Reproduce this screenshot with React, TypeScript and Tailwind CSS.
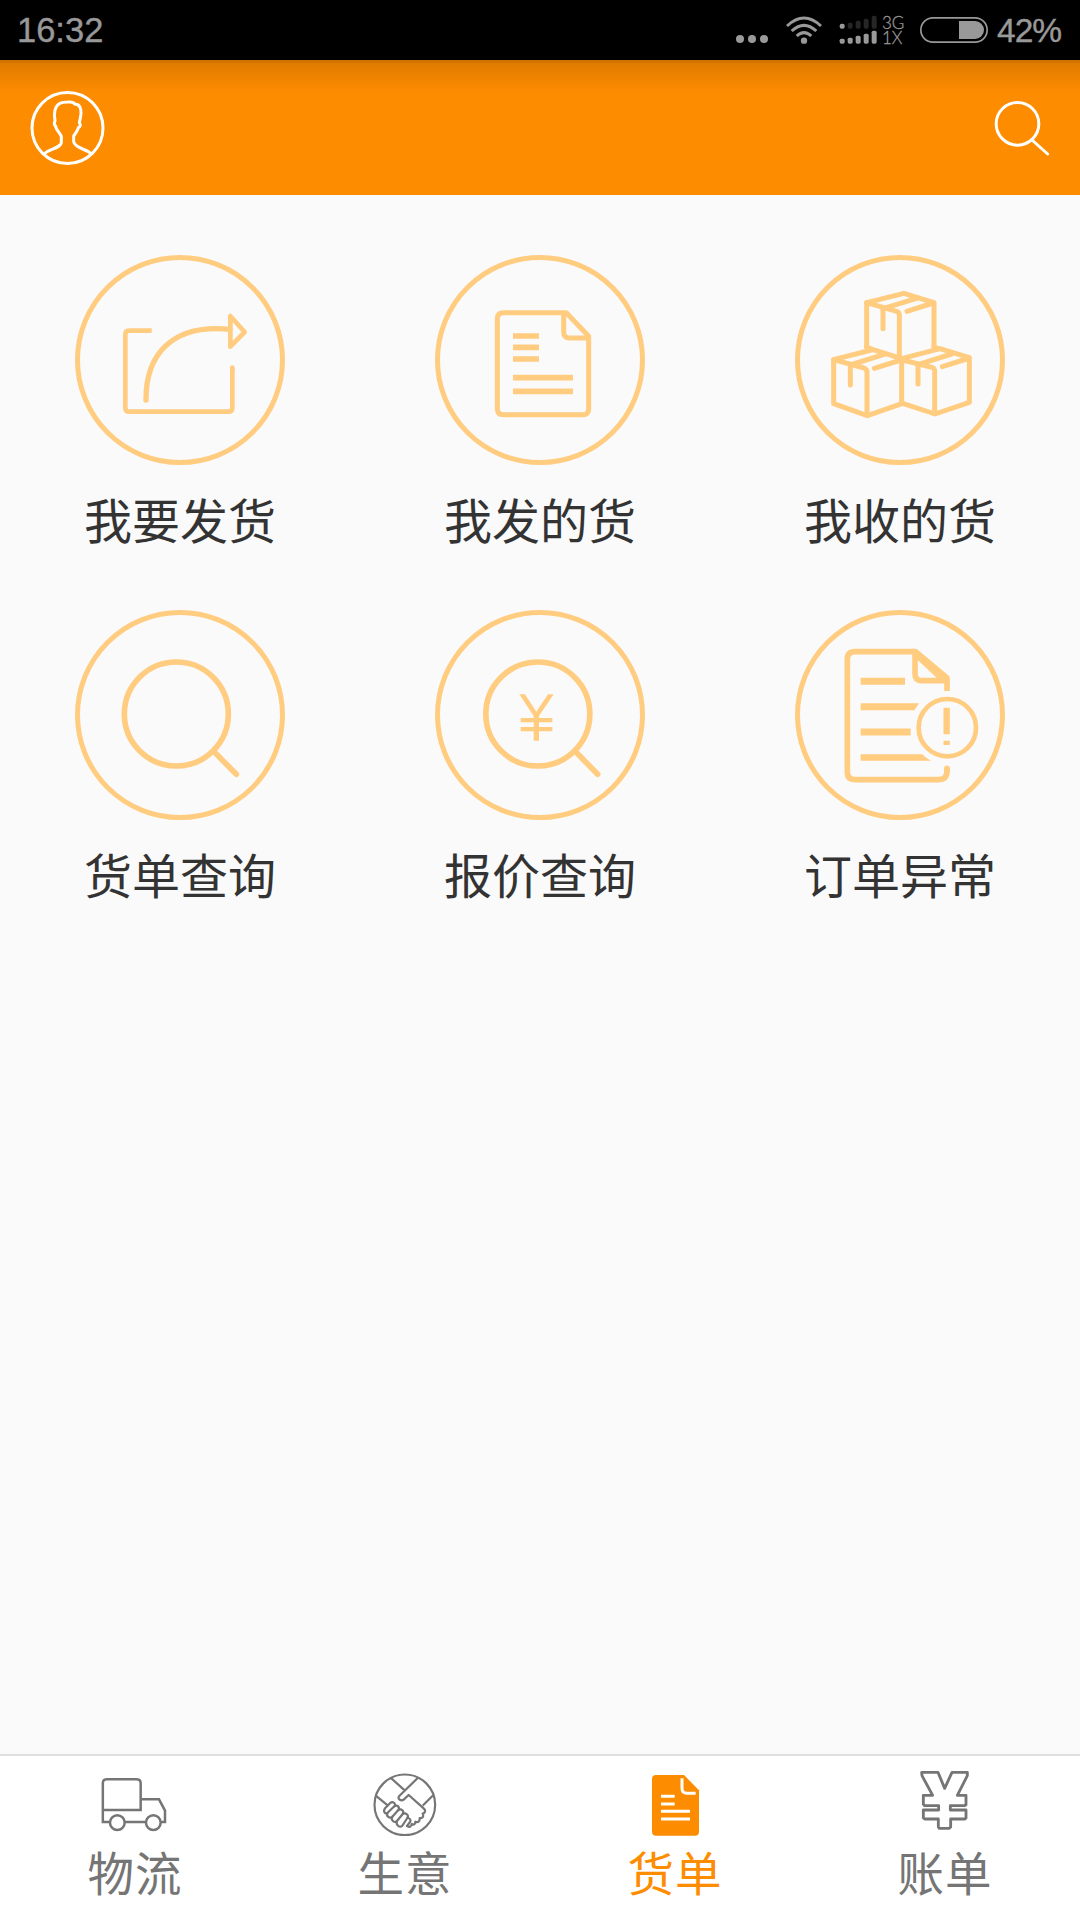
import type { ReactNode } from "react";

const CJK = "font-['Noto_Sans_CJK_SC',sans-serif]";

/* ---------- status bar ---------- */

function WifiIcon() {
  return (
    <svg className="h-[28px] w-[36px]" viewBox="198 46 108 84" fill="none" stroke="#999" strokeWidth="9">
      <path d="M201 76 Q252 28 303 76" />
      <path d="M215 91 Q252 57 289 91" />
      <path d="M230 106 Q252 86 274 106" />
      <circle cx="252" cy="120" r="9.5" fill="#999" stroke="none" />
    </svg>
  );
}

function SignalIcon() {
  const xs = [360, 384, 408, 432, 456];
  const top = [69, 66, 60, 54, 45];
  const bottom = [114, 111, 105, 99, 90];
  return (
    <svg className="h-[30px] w-[38px]" viewBox="358 43 114 90">
      {xs.map((x, i) => (
        <rect key={x} x={x} y={top[i]} width="15" height={84 - top[i]} rx="6" fill={i === 0 ? "#999" : "#262626"} />
      ))}
      {xs.map((x, i) => (
        <rect key={x} x={x} y={bottom[i]} width="15" height={129 - bottom[i]} rx="5" fill="#999" />
      ))}
    </svg>
  );
}

function BatteryIcon() {
  return (
    <svg className="h-[26px] w-[68px]" viewBox="600 51 204 78">
      <rect x="602.5" y="53.5" width="199" height="73" rx="36.5" fill="none" stroke="#999" strokeWidth="5" />
      <path d="M717 63h48a27 27 0 0 1 0 54h-48z" fill="#999" />
    </svg>
  );
}

function StatusBar() {
  return (
    <div className="flex h-[60px] items-center bg-black pl-[17px] pr-[18px] font-['Liberation_Sans',sans-serif] text-[#999]">
      <span className="mt-[1px] text-[34.500px] leading-none [-webkit-text-stroke:0.4px_#999]">16:32</span>
      <div className="ml-auto flex items-center">
        <div className="mt-[18px] flex gap-[4px]">
          <i className="size-[8px] rounded-full bg-[#999]" />
          <i className="size-[8px] rounded-full bg-[#999]" />
          <i className="size-[8px] rounded-full bg-[#999]" />
        </div>
        <div className="ml-[18px] flex">
          <WifiIcon />
        </div>
        <div className="ml-[17px] flex">
          <SignalIcon />
        </div>
        <div className="ml-[5px] flex w-[22px] flex-col font-['Lato',sans-serif] text-[17px] font-light leading-[15px] [-webkit-text-stroke:0.3px_#999]">
          <span>3G</span>
          <span>1X</span>
        </div>
        <div className="ml-[16px] flex">
          <BatteryIcon />
        </div>
        <span className="ml-[9px] mt-[1px] w-[65px] text-[33.500px] leading-none tracking-[-1px] [-webkit-text-stroke:0.4px_#999]">42%</span>
      </div>
    </div>
  );
}

/* ---------- header ---------- */

function Header() {
  return (
    <header className="flex h-[135px] items-start justify-between bg-[#fe8c00] bg-[linear-gradient(to_bottom,#cf7200_0px,#d47500_3px,#e07c00_3px,#ec8200_15px,#f88900_27px,#fe8c00_34px)] pl-[30px] pr-[28px]">
      <svg className="mt-[30px] h-[75px] w-[75px]" viewBox="90 270 225 225" fill="none" stroke="#fff" strokeWidth="9" strokeLinejoin="round">
        <circle cx="202.500" cy="384" r="106.500" />
        <path d="M134 461 C143 449 184 444 184 427 V409 C179 398 167 388 167 378 C160 374 163 368 165 362 C163 352 163 338 165 330 C171 310 183 306 204 306 C218 305 222 308 224 312 C238 312 244 323 243 341 C242 352 240 360 238 368 C243 374 241 380 235 383 C233 392 227 400 221 408 V425 C224 444 264 449 273 461" />
      </svg>
      <svg className="mt-[38px] h-[60px] w-[60px]" viewBox="816 294 180 180" fill="none" stroke="#fff" strokeWidth="9" strokeLinecap="round">
        <circle cx="892.500" cy="371.500" r="64" />
        <path d="M936 420 L983 462" />
      </svg>
    </header>
  );
}

/* ---------- menu ---------- */

const ShipIcon = (
  <g strokeWidth="14">
    <path d="M275 272H208Q196 272 196 284V503Q196 515 208 515H505Q517 515 517 503V383" />
    <path d="M517 388V383" strokeLinecap="round" />
    <path d="M258 480C257 350 330 250 510 268" strokeWidth="16" strokeLinecap="round" />
    <path d="M511 228V320L554 276Z" strokeLinejoin="round" />
  </g>
);

const SentIcon = (
  <g strokeWidth="15" strokeLinejoin="round">
    <path d="M439 218H250Q232 218 232 236V506Q232 524 250 524H488Q506 524 506 506V289Z" />
    <path d="M431 220V276Q431 294 449 294H504" />
    <path d="M279 288H357M279 322H357M279 357H357M279 413H459M279 454H459" strokeWidth="17" />
  </g>
);

const BoxesIcon = (
  <g strokeWidth="15" strokeLinejoin="round" strokeLinecap="round">
    <path d="M260 322V188L372 160L462 188V320" />
    <path d="M260 188L350 214Q358 216 358 226V356" />
    <path d="M309 266V206L410 175M381 214L450 192" />
    <path d="M270 326L365 356L480 326L568 353V487L465 522L368 490L262 527L161 491V359L275 330" />
    <path d="M260 320L275 328M462 320L475 326" />
    <path d="M161 359L252 384Q261 387 261 397V525" />
    <path d="M211 435V375L310 344M283 385L363 360" />
    <path d="M365 356V487" />
    <path d="M368 360L456 382Q464 385 464 394V520" />
    <path d="M414 432V374L515 342M487 380L560 357" />
  </g>
);

const SearchIcon = (
  <g strokeWidth="17">
    <circle cx="349" cy="357" r="156" />
    <path d="M460 468L529 538" strokeLinecap="round" />
  </g>
);

const QuoteIcon = (
  <g strokeWidth="17">
    <circle cx="353.500" cy="357" r="156" />
    <path d="M465 468L533 538" strokeLinecap="round" />
    <path d="M298 298H315L349 350L384 298H401L357 363V437H341V363Z" fill="#ffcc80" stroke="none" />
    <path d="M302 375.500H397M302 402.500H397" strokeWidth="13" />
  </g>
);

const AlertIcon = (
  <g strokeWidth="17">
    <path d="M501 288V249L407 170H225Q202 170 202 193V531Q202 554 225 554H475Q500 554 501 530V520" strokeLinejoin="round" />
    <path d="M501 526V520" strokeLinecap="round" />
    <path d="M405 172V236Q405 257 426 257H500" />
    <path d="M405 170L501 249V257L474 252L412 194Z" fill="#ffcc80" stroke="none" />
    <path d="M242 259H375M242 411H392" strokeWidth="21" />
    <path d="M242 325H417L403 346H242ZM242 478H426Q438 489 453 497H242Z" fill="#ffcc80" stroke="none" />
    <circle cx="502" cy="398" r="86" strokeWidth="14" />
    <path d="M500 338V418M500 437V450" strokeWidth="19" />
  </g>
);

const menu: { label: string; icon: ReactNode }[] = [
  { label: "我要发货", icon: ShipIcon },
  { label: "我发的货", icon: SentIcon },
  { label: "我收的货", icon: BoxesIcon },
  { label: "货单查询", icon: SearchIcon },
  { label: "报价查询", icon: QuoteIcon },
  { label: "订单异常", icon: AlertIcon },
];

function MenuItem({ label, icon }: { label: string; icon: ReactNode }) {
  return (
    <div className="flex h-[355px] flex-col items-center">
      <svg className="h-[210px] w-[210px]" viewBox="45 45 630 630" fill="none" stroke="#ffcc80">
        <circle cx="360" cy="360" r="307.500" strokeWidth="15" />
        {icon}
      </svg>
      <span className="mt-[25px] text-[48px] leading-[56px] text-[#333]">{label}</span>
    </div>
  );
}

/* ---------- tab bar ---------- */

const TruckIcon = (
  <g strokeWidth="7.500">
    <path d="M128.500 210V130Q128.500 118 140 118H230Q242 118 242 130V210ZM128.500 210V246H150M194 246H258M242 178H297L315 212V246H300" />
    <circle cx="172" cy="248" r="22" />
    <circle cx="280" cy="248" r="22" />
  </g>
);

const HandshakeIcon = (
  <g strokeWidth="6.500" strokeLinejoin="round" strokeLinecap="round">
    <circle cx="1034.500" cy="194.500" r="91" />
    <path d="M995 116L1034 151M1071 116L1017 169C1012 178 1024 184 1031 179L1046 165L1091 205C1098 211 1096 219 1088 221C1092 230 1088 236 1079 234C1080 243 1075 249 1066 245C1066 252 1062 256 1055 252C1055 260 1047 263 1041 258" />
    <path d="M950 169L983 196M1118 167L1090 195" />
    <path d="M975 205L990 190C998 182 1010 191 1003 199L982 219C976 224 968 214 975 205Z" />
    <path d="M1003 199C1011 193 1021 202 1015 210L997 230C989 238 977 228 983 219" />
    <path d="M1015 210C1024 204 1034 214 1028 222L1011 243C1003 250 991 240 997 230" />
    <path d="M1028 222C1037 216 1048 226 1042 234L1027 257C1019 265 1006 254 1011 243" />
    <path d="M1042 234C1050 234 1054 240 1050 246L1041 258" />
  </g>
);

const OrderIcon = (
  <g>
    <path d="M168 105H252L297 151V275Q297 287 285 287H168Q156 287 156 275V117Q156 105 168 105Z" fill="#fe8c00" stroke="none" />
    <path d="M246 115V145Q246 160 261 160H287" stroke="#fff" strokeWidth="9" />
    <path d="M183 169H224M183 192H224M183 214H270M183 237H270" stroke="#fff" strokeWidth="9" />
  </g>
);

const BillIcon = (
  <path
    strokeWidth="8.500"
    strokeLinejoin="round"
    d="M965 97H1014L1034 145L1056 97H1102V107L1072 166H1098V194L1093 197H1051V210H1098V234L1094 237H1052V261L1048 265H1018L1015 261V237H974L970 233V210H1016V197H974L970 193V166H998L966 107Z"
  />
);

const tabs = [
  { label: "物流", icon: TruckIcon, box: "90 84 270 204", active: false },
  { label: "生意", icon: HandshakeIcon, box: "900 84 270 204", active: false },
  { label: "货单", icon: OrderIcon, box: "90 84 270 204", active: true },
  { label: "账单", icon: BillIcon, box: "900 84 270 204", active: false },
];

function TabBar() {
  return (
    <nav className="grid h-[166px] grid-cols-4 border-t-2 border-[#dedede] bg-white">
      {tabs.map((t) => (
        <div key={t.label} className={t.active ? "flex flex-col items-center text-[#fe8c00]" : "flex flex-col items-center text-[#757575]"}>
          <svg className="mt-[12px] h-[68px] w-[90px]" viewBox={t.box} fill="none" stroke="currentColor">
            {t.icon}
          </svg>
          <span className="mt-[8px] text-[46.500px] leading-[54px] tracking-[1px]">{t.label}</span>
        </div>
      ))}
    </nav>
  );
}

export default function App() {
  return (
    <div className={`flex h-[1920px] w-[1080px] flex-col bg-[#fafafa] ${CJK}`}>
      <StatusBar />
      <Header />
      <main className="grid flex-1 grid-cols-3 content-start pt-[60px]">
        {menu.map((m) => (
          <MenuItem key={m.label} {...m} />
        ))}
      </main>
      <TabBar />
    </div>
  );
}
